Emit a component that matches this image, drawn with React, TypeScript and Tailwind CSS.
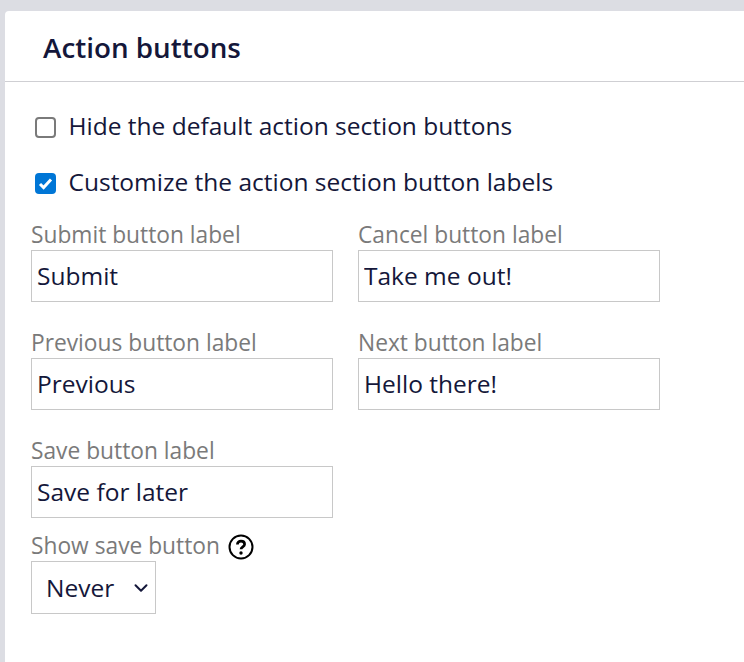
import { ChevronDown } from "lucide-react";

type FieldProps = {
  label: string;
  value: string;
};

function Field({ label, value }: FieldProps) {
  return (
    <div className="w-[302px]">
      <label className="block h-[31px] text-[22.75px] leading-[32px] text-[#7a7a7a]">{label}</label>
      <input
        type="text"
        readOnly
        value={value}
        className="block w-full h-[52px] px-[5px] pb-[2px] border border-[#c8c8c8] bg-white text-[24.5px] text-[#14173a] outline-none"
      />
    </div>
  );
}

function HelpIcon() {
  return (
    <svg width="26" height="26" viewBox="0 0 26 26" fill="none" className="ml-[8px] mt-[2px]">
      <circle cx="13" cy="13" r="11.5" stroke="#000" strokeWidth="2" />
      <path
        d="M9.4 10.4c0-1.9 1.6-3.2 3.6-3.2s3.6 1.2 3.6 3c0 2.6-3.6 2.6-3.6 5"
        stroke="#000"
        strokeWidth="2.7"
      />
      <circle cx="13" cy="19" r="1.7" fill="#000" />
    </svg>
  );
}

export default function App() {
  return (
    <div className="h-[662px] w-[744px] overflow-hidden bg-[#dcdde3] pt-[11px] pl-[5px] font-['Open_Sans',sans-serif]">
      <div className="h-[651px] rounded-tl-[4px] bg-white">
        <div className="h-[71px] border-b border-[#cfcfd3] pl-[38px] pt-[18px]">
          <h2 className="text-[27.8px] leading-[36px] font-semibold text-[#14173a]">Action buttons</h2>
        </div>

        <div className="pl-[26px] pt-[26px]">
          <div className="flex h-[36px] items-center pl-[4px] text-[24.5px] text-[#14173a]">
            <span className="mt-[2px] h-[21px] w-[21px] rounded-[4px] border-2 border-[#7a7a7a] bg-white" />
            <span className="ml-[12.5px]">Hide the default action section buttons</span>
          </div>

          <div className="mt-[20px] flex h-[36px] items-center pl-[4px] text-[24.5px] text-[#14173a]">
            <span className="mt-[2px] flex h-[21px] w-[21px] items-center justify-center rounded-[4px] bg-[#0076d6]">
              <svg width="15" height="15" viewBox="0 0 15 15" fill="none">
                <path d="M2 8l3.6 3.6L13 3.6" stroke="#fff" strokeWidth="3" />
              </svg>
            </span>
            <span className="ml-[12.5px]">Customize the action section button labels</span>
          </div>

          <div className="mt-[19px] grid grid-cols-[302px_302px] gap-x-[25px] gap-y-[25px]">
            <Field label="Submit button label" value="Submit" />
            <Field label="Cancel button label" value="Take me out!" />
            <Field label="Previous button label" value="Previous" />
            <Field label="Next button label" value="Hello there!" />
            <Field label="Save button label" value="Save for later" />
          </div>

          <div className="mt-[13px] flex h-[30px] items-center text-[22.75px] leading-[30px] text-[#7a7a7a]">
            Show save button
            <HelpIcon />
          </div>
          <div className="flex h-[53px] w-[125px] items-center border border-[#c8c8c8] bg-white pl-[14px] text-[24.5px] text-[#14173a]">
            <span className="mt-[2px]">Never</span>
            <ChevronDown size={22} strokeWidth={2.2} className="ml-[16px]" />
          </div>
        </div>
      </div>
    </div>
  );
}
